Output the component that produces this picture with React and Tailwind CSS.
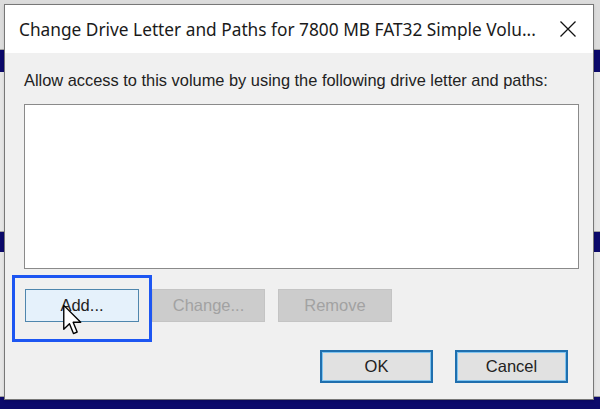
export default function App() {
    return (
        <div className="relative w-[600px] h-[409px] overflow-hidden bg-[#dcdcdc]">
            {/* desktop behind the dialog */}
            <div className="flex h-full flex-col">
                <div className="h-[50px] border-b border-[#a0a0a0]" />
                <div className="h-[22px] bg-[#0c0a6b]" />
                <div className="h-[160px] border-b border-[#a0a0a0] bg-[#e6e6e6]" />
                <div className="h-[20px] bg-[#0c0a6b]" />
                <div className="h-[145px] border-b border-[#a0a0a0] bg-[#e6e6e6]" />
                <div className="flex-1 bg-[#0c0a6b]" />
            </div>

            {/* dialog window */}
            <div className="absolute left-[4px] top-[4px] flex h-[396px] w-[590px] flex-col border border-[#777777] bg-[#f0f0f0] shadow">
                <div className="flex h-[48px] items-center justify-between bg-white pl-[14px] pr-[16px] pt-[2px]">
                    <span className="text-[17.3px] text-[#1a1a1a] [font-family:'Noto_Sans',sans-serif]">
                        Change Drive Letter and Paths for 7800 MB FAT32 Simple Volu...
                    </span>
                    <svg width="18" height="18" viewBox="0 0 18 18" className="mb-[2px]">
                        <path d="M1.5 1.5 L16.5 16.5 M16.5 1.5 L1.5 16.5" stroke="#111" strokeWidth="1.3" />
                    </svg>
                </div>

                <div className="flex flex-1 flex-col pl-[19px] pr-[15px] [font-family:'Liberation_Sans',Arial,sans-serif]">
                    <p className="mt-[17px] text-[16.4px] leading-[20px] text-[#222]">
                        Allow access to this volume by using the following drive letter and paths:
                    </p>
                    <div className="mt-[14px] h-[165px] w-[555px] border border-[#8a8a8a] bg-white" />

                    <div className="mt-[20px] flex gap-[13px] pl-[1px]">
                        <button className="h-[33px] w-[114px] border-[1.5px] border-[#4f86ad] bg-[#e5f1fb] text-[16.5px] text-[#222]">
                            Add...
                        </button>
                        <button className="h-[33px] w-[113px] border border-[#c4c4c4] bg-[#cccccc] text-[16.5px] text-[#a2a2a2]">
                            Change...
                        </button>
                        <button className="h-[33px] w-[114px] border border-[#c4c4c4] bg-[#cccccc] text-[16.5px] text-[#a2a2a2]">
                            Remove
                        </button>
                    </div>

                    <div className="mt-[28px] flex justify-end gap-[22px] pr-[10px]">
                        <button className="h-[33px] w-[113px] border-2 border-[#1f6fae] bg-[#e1e1e1] text-[16.5px] text-[#222] shadow-[inset_0_0_0_1px_#7fc4f0]">
                            OK
                        </button>
                        <button className="h-[33px] w-[113px] border-2 border-[#1f6fae] bg-[#e1e1e1] text-[16.5px] text-[#222] shadow-[inset_0_0_0_1px_#7fc4f0]">
                            Cancel
                        </button>
                    </div>
                </div>
            </div>

            {/* highlight annotation around Add... */}
            <div className="absolute left-[12px] top-[275px] h-[67px] w-[140px] border-[3px] border-[#1d56f2]" />

            {/* mouse pointer */}
            <svg className="absolute left-[63px] top-[304px]" width="20" height="32" viewBox="0 0 13 20">
                <path
                    d="M0.5 0.5 L0.5 16 L4.2 12.4 L6.8 18.8 L9.2 17.8 L6.6 11.5 L11.5 11.5 Z"
                    fill="#fff"
                    stroke="#000"
                    strokeWidth="0.9"
                    strokeLinejoin="round"
                />
            </svg>
        </div>
    );
}
